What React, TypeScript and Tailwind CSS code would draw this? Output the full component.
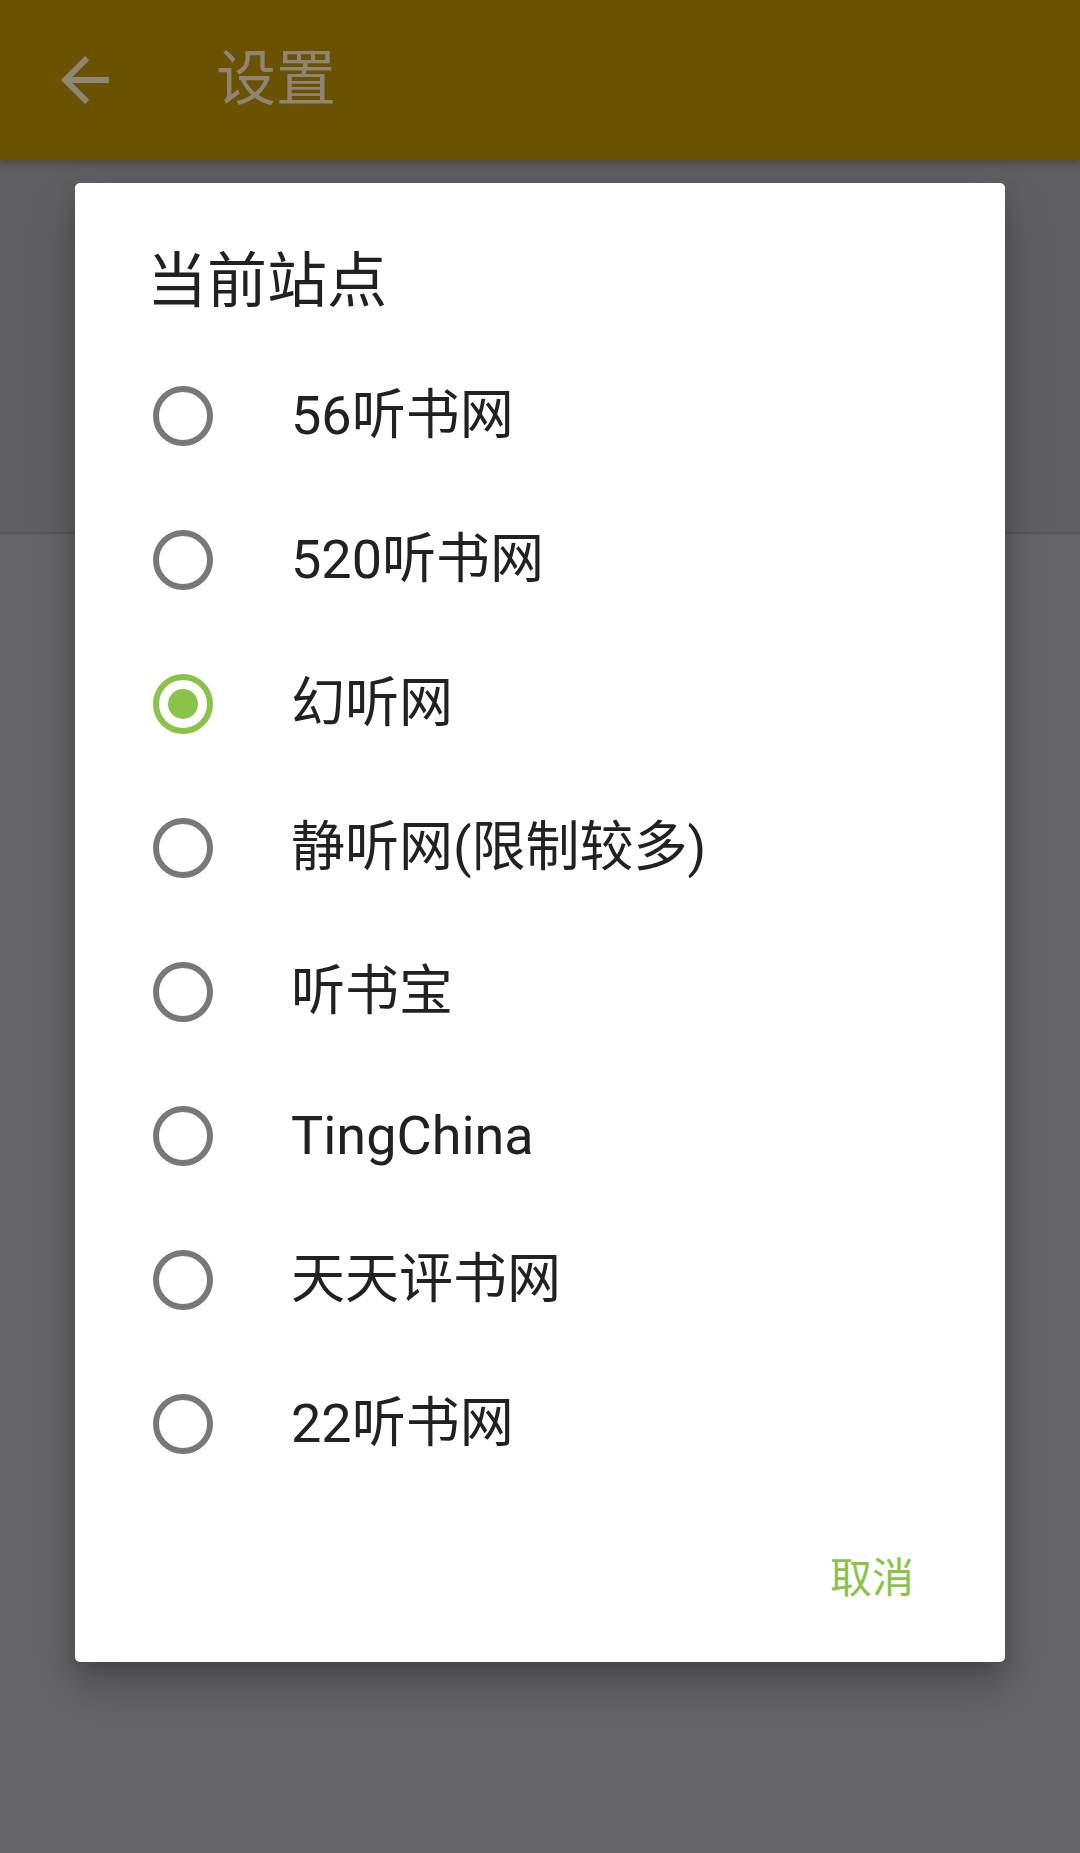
import React from "react";

const items = [
  "56听书网",
  "520听书网",
  "幻听网",
  "静听网(限制较多)",
  "听书宝",
  "TingChina",
  "天天评书网",
  "22听书网",
];

function Radio({ checked }: { checked: boolean }) {
  if (checked) {
    return (
      <div className="w-[60px] h-[60px] rounded-full border-[6px] border-[#8bc34a] flex items-center justify-center shrink-0">
        <div className="w-[30px] h-[30px] rounded-full bg-[#8bc34a]" />
      </div>
    );
  }
  return <div className="w-[60px] h-[60px] rounded-full border-[6px] border-[#787878] shrink-0" />;
}

export default function App() {
  return (
    <div className="relative w-[1080px] h-[1853px] overflow-hidden bg-[#656468] font-[Roboto,'Noto_Sans_CJK_SC',sans-serif]">
      {/* dimmed app bar */}
      <div className="relative z-10 h-[160px] bg-[#6a5200] flex items-center shadow-[0_4px_8px_rgba(0,0,0,0.25)]">
        <svg
          className="ml-[49px] w-[72px] h-[72px] shrink-0"
          viewBox="0 0 24 24"
          fill="#8e8574"
        >
          <path d="M20 11H7.83l5.59-5.59L12 4l-8 8 8 8 1.41-1.41L7.83 13H20v-2z" />
        </svg>
        <div className="ml-[95px] text-[60px] leading-none text-[#8e8574]">设置</div>
      </div>

      {/* dimmed page content */}
      <div className="h-[372px] bg-[#605f63]" />
      <div className="h-[2px] bg-[#555458]" />

      {/* dialog */}
      <div className="absolute left-[75px] top-[183px] w-[930px] h-[1479px] bg-white rounded-[5px] shadow-[0_24px_48px_rgba(0,0,0,0.22),0_10px_20px_rgba(0,0,0,0.15)] flex flex-col">
        <div className="pt-[58px] pl-[72px] text-[60px] leading-[82px] text-[#212121]">当前站点</div>
        <div className="mt-[21px] flex flex-col">
          {items.map((label, i) => (
            <div key={label} className="h-[144px] flex items-center pl-[78px]">
              <Radio checked={i === 2} />
              <div className="ml-[78px] text-[54px] leading-none text-[#212121]">{label}</div>
            </div>
          ))}
        </div>
        <div className="flex-1 flex items-center justify-end pr-[91px]">
          <div className="text-[42px] leading-none text-[#8bc34a]">取消</div>
        </div>
      </div>
    </div>
  );
}
